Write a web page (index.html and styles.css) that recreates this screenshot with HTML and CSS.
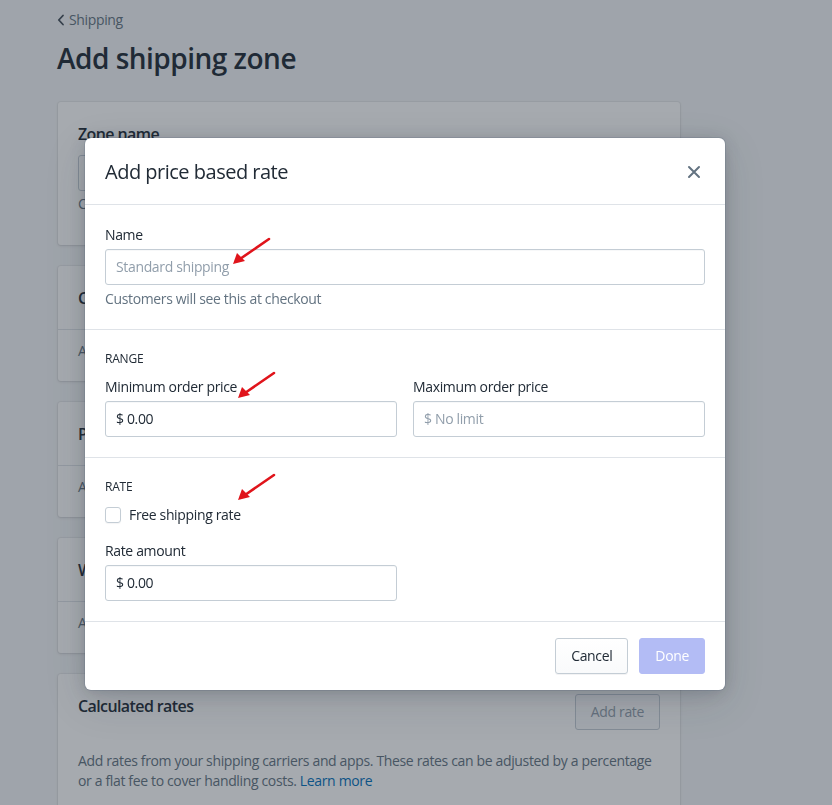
FILE: index.html
```html
<!DOCTYPE html>
<html lang="en">
<head>
<meta charset="utf-8">
<title>Add shipping zone</title>
<link rel="stylesheet" href="styles.css">
</head>
<body>
<div class="page">
  <a class="back" href="#"><svg class="back-icon" viewBox="0 0 8 12" width="8" height="12"><path d="M6 1.5 1.8 6 6 10.5" fill="none" stroke="currentColor" stroke-width="1.8" stroke-linecap="round" stroke-linejoin="round"/></svg>Shipping</a>
  <h1 class="page-title">Add shipping zone</h1>

  <div class="card card-zone">
    <h2 class="card-heading">Zone name</h2>
    <div class="bg-input"></div>
    <p class="card-text">Customers won't see this</p>
  </div>

  <div class="card">
    <div class="card-header"><h2 class="card-heading">Countries</h2></div>
    <div class="card-body"><p class="card-text">Add countries to this zone</p></div>
  </div>

  <div class="card">
    <div class="card-header"><h2 class="card-heading">Price based rates</h2></div>
    <div class="card-body"><p class="card-text">Add rates based on the price of a customer's order</p></div>
  </div>

  <div class="card">
    <div class="card-header"><h2 class="card-heading">Weight based rates</h2></div>
    <div class="card-body"><p class="card-text">Add rates based on the weight of a customer's order</p></div>
  </div>

  <div class="card card-calc">
    <div class="calc-header">
      <h2 class="card-heading">Calculated rates</h2>
      <span class="btn-ghost">Add rate</span>
    </div>
    <p class="card-text calc-text">Add rates from your shipping carriers and apps. These rates can be adjusted by a percentage or a flat fee to cover handling costs. <a class="link" href="#">Learn more</a></p>
  </div>
</div>

<div class="overlay">
  <div class="modal">
    <div class="modal-header">
      <h2 class="modal-title">Add price based rate</h2>
      <svg class="close" viewBox="0 0 14 14" width="14" height="14"><path d="M2 2 12 12M12 2 2 12" stroke="currentColor" stroke-width="2" stroke-linecap="round"/></svg>
    </div>

    <div class="section">
      <label class="label">Name</label>
      <div class="input placeholder">Standard shipping</div>
      <p class="help">Customers will see this at checkout</p>
    </div>

    <div class="section section-sub">
      <h3 class="subheading">RANGE</h3>
      <div class="row">
        <div class="field">
          <label class="label">Minimum order price</label>
          <div class="input">$ 0.00</div>
        </div>
        <div class="field">
          <label class="label">Maximum order price</label>
          <div class="input placeholder">$ No limit</div>
        </div>
      </div>
    </div>

    <div class="section section-sub">
      <h3 class="subheading">RATE</h3>
      <div class="check-row"><span class="checkbox"></span><span class="check-label">Free shipping rate</span></div>
      <div class="row rate-row">
        <div class="field">
          <label class="label">Rate amount</label>
          <div class="input">$ 0.00</div>
        </div>
        <div class="field"></div>
      </div>
    </div>

    <div class="modal-footer">
      <span class="btn">Cancel</span>
      <span class="btn btn-primary">Done</span>
    </div>
  </div>

  <svg class="arrow arrow-1" viewBox="0 0 40 30" width="40" height="30"><path d="M38 2 9 22" stroke="#e0141b" stroke-width="2.6" stroke-linecap="round"/><path d="M2 27 6 16 14 24Z" fill="#e0141b"/></svg>
  <svg class="arrow arrow-2" viewBox="0 0 40 30" width="40" height="30"><path d="M38 2 9 22" stroke="#e0141b" stroke-width="2.6" stroke-linecap="round"/><path d="M2 27 6 16 14 24Z" fill="#e0141b"/></svg>
  <svg class="arrow arrow-3" viewBox="0 0 40 30" width="40" height="30"><path d="M38 2 9 22" stroke="#e0141b" stroke-width="2.6" stroke-linecap="round"/><path d="M2 27 6 16 14 24Z" fill="#e0141b"/></svg>
</div>
</body>
</html>
```

FILE: styles.css
```css
* { box-sizing: border-box; }
html, body { margin: 0; padding: 0; }
body {
  background: #f4f6f8;
  font-family: "Open Sans", "Noto Sans", sans-serif;
  font-size: 14px;
  line-height: 20px;
  letter-spacing: -0.35px;
  color: #212b36;
  height: 805px;
  overflow: hidden;
}
h1, h2, h3, p { margin: 0; }

.page {
  width: 622px;
  margin-left: 58px;
  padding-top: 10px;
}
.back {
  display: flex;
  align-items: center;
  gap: 4px;
  color: #637381;
  text-decoration: none;
  font-size: 14px;
  line-height: 20px;
  margin-left: -1px;
}
.back-icon { color: #454f5b; }
.page-title {
  font-size: 28px;
  line-height: 36px;
  font-weight: 600;
  letter-spacing: -0.5px;
  margin-top: 10px;
  margin-bottom: 26px;
  margin-left: -1px;
}

.card {
  background: #fff;
  border-radius: 3px;
  box-shadow: 0 0 0 1px rgba(63,63,68,.05), 0 1px 3px 0 rgba(63,63,68,.15);
  margin-bottom: 21px;
}
.card-heading {
  font-size: 16px;
  line-height: 24px;
  font-weight: 600;
  letter-spacing: -0.6px;
}
.card-text { color: #637381; }
.card-zone { padding: 20px; height: 143px; }
.bg-input {
  height: 36px;
  border: 1px solid #c4cdd5;
  border-radius: 3px;
  margin-top: 9px;
  margin-bottom: 3px;
}
.card-header { padding: 20px 20px 19px; border-bottom: 1px solid #dfe3e8; }
.card-body { padding: 11px 20px 20px; }
.card-calc { padding: 20px; }
.calc-header {
  display: flex;
  justify-content: space-between;
  align-items: flex-start;
}
.btn-ghost {
  height: 36px;
  padding: 0 15px;
  border: 1px solid #c4cdd5;
  border-radius: 3px;
  color: #919eab;
  display: flex;
  align-items: center;
  background: #f9fafb;
}
.calc-text { margin-top: 21px; }
.link { color: #006fbb; text-decoration: none; }

.overlay {
  position: fixed;
  inset: 0;
  background: rgba(33,43,54,.4);
  padding: 138px 0 0 85px;
}
.modal {
  width: 640px;
  background: #fff;
  border-radius: 6px;
  box-shadow: 0 0 0 1px rgba(6,44,82,.1), 0 2px 16px rgba(33,43,54,.2), 0 12px 40px rgba(33,43,54,.15);
}
.modal-header {
  display: flex;
  align-items: center;
  justify-content: space-between;
  padding: 21px 24px 19px 20px;
  border-bottom: 1px solid #dfe3e8;
}
.modal-title {
  font-size: 20px;
  line-height: 26px;
  font-weight: 400;
  letter-spacing: -0.5px;
}
.close { color: #637381; width: 14px; height: 14px; }

.section {
  padding: 20px;
  border-bottom: 1px solid #dfe3e8;
}
.section-sub { padding-top: 21px; }
.label { display: block; margin-bottom: 4px; }
.input {
  height: 36px;
  border: 1px solid #c4cdd5;
  border-radius: 3px;
  padding: 0 10px;
  display: flex;
  align-items: center;
  box-shadow: inset 0 1px 0 0 rgba(99,115,129,.05);
  color: #212b36;
}
.placeholder { color: #919eab; }
.help { color: #637381; margin-top: 4px; }
.subheading {
  font-size: 12px;
  line-height: 16px;
  font-weight: 500;
  letter-spacing: -0.2px;
  margin-bottom: 10px;
}
.row {
  display: grid;
  grid-template-columns: 1fr 1fr;
  gap: 16px;
}
.check-row {
  display: flex;
  align-items: center;
  gap: 8px;
  height: 20px;
  margin-top: 10px;
}
.checkbox {
  width: 16px;
  height: 16px;
  border: 1px solid #c4cdd5;
  border-radius: 3px;
  box-shadow: 0 1px 1px rgba(33,43,54,.05);
}
.rate-row { margin-top: 16px; }

.modal-footer {
  display: flex;
  justify-content: flex-end;
  gap: 11px;
  padding: 16px 20px;
}
.btn {
  height: 36px;
  padding: 0 15px;
  display: flex;
  align-items: center;
  border: 1px solid #c4cdd5;
  border-radius: 3px;
  background: linear-gradient(to bottom, #fff, #f9fafb);
  box-shadow: 0 1px 0 0 rgba(22,29,37,.05);
  color: #212b36;
}
.btn-primary {
  background: #b3bcf5;
  border-color: #b3bcf5;
  color: #fff;
  box-shadow: none;
}

.arrow { position: absolute; }
.arrow-1 { left: 231px; top: 237px; }
.arrow-2 { left: 236px; top: 371px; }
.arrow-3 { left: 236px; top: 473px; }
```
